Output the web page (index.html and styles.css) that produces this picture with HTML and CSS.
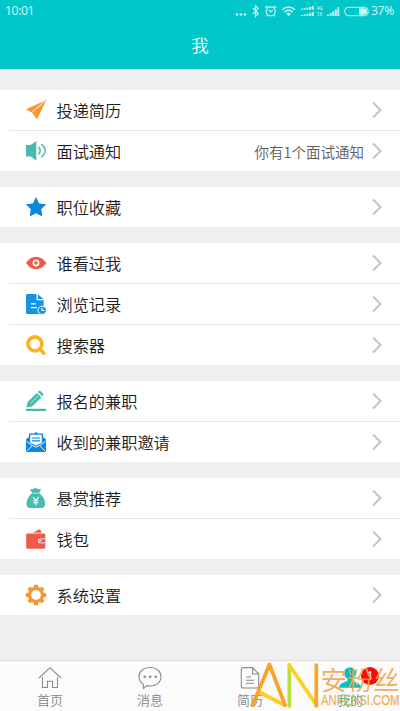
FILE: index.html
```html
<!DOCTYPE html>
<html lang="zh-CN">
<head>
<meta charset="utf-8">
<title>我</title>
<link rel="stylesheet" href="styles.css">
</head>
<body>
<svg class="defs" aria-hidden="true"><symbol id="chevron" viewBox="0 0 10 18"><path d="M1 1.5 8.5 9 1 16.5" fill="none" stroke="#c3c3c8" stroke-width="2"/></symbol></svg>
<div class="screen">
  <header class="header">
    <div class="status">
      <span class="time">10:01</span>
      <svg class="indicators" width="147" height="20" viewBox="234 0 147 20" fill="#c9f6f5">
        <circle cx="237" cy="13.5" r="1.3"/><circle cx="240.9" cy="13.5" r="1.3"/><circle cx="244.8" cy="13.5" r="1.3"/>
        <path d="m253 7 5.2 5.8-2.7 2.6V4.8l2.7 2.6-5.2 5.7" fill="none" stroke="#c9f6f5" stroke-width="1.2"/>
        <g fill="none" stroke="#c9f6f5" stroke-width="1.2"><circle cx="270.7" cy="10.3" r="4.5"/><path d="m268.7 8.8 2 2 2-2M265.5 6.7l2-1.9m6.4 0 2 1.9M267.4 14.2l-1 1.2m7.6-1.2 1 1.2"/></g>
        <g fill="none" stroke="#c9f6f5" stroke-width="1.4"><path d="M282.2 8.8q6.4-5.6 12.8 0M284.4 11.1q4.2-3.6 8.4 0"/></g><path d="m286.2 12.6q2.4-1.8 4.8 0l-2.4 2.6z"/>
        <path d="M301 8.8V7.7h2v1.1zm2.7 0V7.3h2v1.5zm2.7 0V6.6h2v2.2zm2.7 0V5.8h2v3zm2.7 0V5h2v3.8zM301 15.1V14h2v1.1zm2.7 0v-1.6h2v1.6zm2.7 0v-2.3h2v2.3zm2.7 0v-3h2v3zm2.7 0v-4h2v4z"/>
        <text class="net" x="316.5" y="9">4G</text><text class="net" x="316.5" y="15.4">1X</text>
        <path d="M327 15v-1.5h2V15zm2.6 0v-2.8h2V15zm2.6 0v-4.5h2V15zm2.6 0V8.6h2V15zm2.6 0V6.2h1.8V15z"/>
        <rect x="344.7" y="6.3" width="23.6" height="8.4" rx="3.8" fill="none" stroke="#c9f6f5"/><path d="M359 7.2h5q3.2 0 3.2 3.3t-3.2 3.3h-5z"/>
      </svg>
      <span class="percent">37%</span>
    </div>
    <h1 class="title">我</h1>
  </header>

  <main class="content">
    <section class="group">
      <div class="row">
        <svg class="icon" viewBox="0 0 20 20" fill="#f7982f"><path d="M20.3 0 0 9.2l4.8 2.8L16.8 3 6.2 12.8 11 19.6z"/><path d="m4.6 11.8 2 1.2L20 .2z"/><path d="M19 1.2 5.4 12.7" stroke="#fff" stroke-width=".8"/></svg>
        <span class="label">投递简历</span><svg class="arrow"><use href="#chevron"/></svg>
      </div>
      <div class="row">
        <svg class="icon" viewBox="0 0 20 20" fill="#48bbb1"><path d="M0 4h4.6L10.3 0v19.5L4.6 15.5H0z"/><path d="M12.4 6q3.5 3.8 0 7.5M15.2 3.2q8 6.5 0 13" fill="none" stroke="#48bbb1" stroke-width="1.5"/></svg>
        <span class="label">面试通知</span><span class="note">你有1个面试通知</span><svg class="arrow"><use href="#chevron"/></svg>
      </div>
    </section>

    <section class="group">
      <div class="row">
        <svg class="icon" viewBox="0 0 20 20"><path fill="#0c87df" d="m10 0 3.2 6.4 7 .9-5 4.9 1.2 7.3L10 16.2l-6.3 3.3L4.8 12.2-.1 7.3l6.9-.9z"/></svg>
        <span class="label">职位收藏</span><svg class="arrow"><use href="#chevron"/></svg>
      </div>
    </section>

    <section class="group">
      <div class="row">
        <svg class="icon" viewBox="0 0 20 20"><path fill="#ed594b" d="M0 10Q4.5 3.8 10 3.8T20.4 10Q15.7 16.2 10 16.2T0 10z"/><circle cx="10" cy="10" r="2.6" fill="none" stroke="#fff" stroke-width="1.6"/></svg>
        <span class="label">谁看过我</span><svg class="arrow"><use href="#chevron"/></svg>
      </div>
      <div class="row">
        <svg class="icon" viewBox="0 0 20 20"><path fill="#1594df" d="M1.5 0h9v6.3h7.2v12.2q0 1.5-1.5 1.5H1.5Q0 20 0 18.5v-17Q0 0 1.5 0zM11.8 0l5.5 5h-5.5z"/><path d="M5 9.8h5M5 13.7h6" stroke="#fff" stroke-width="1.3"/><circle cx="16.2" cy="16.3" r="4.2" fill="#1594df" stroke="#fff"/><path d="M16 13.8v2.7h2.5" fill="none" stroke="#fff" stroke-width="1.1"/></svg>
        <span class="label">浏览记录</span><svg class="arrow"><use href="#chevron"/></svg>
      </div>
      <div class="row">
        <svg class="icon" viewBox="0 0 20 20" fill="none" stroke="#fcb122"><circle cx="8.9" cy="8.9" r="7" stroke-width="3.6"/><path d="m14 14.2 4 4" stroke-width="3.5" stroke-linecap="round"/></svg>
        <span class="label">搜索器</span><svg class="arrow"><use href="#chevron"/></svg>
      </div>
    </section>

    <section class="group">
      <div class="row">
        <svg class="icon" viewBox="0 0 20 20" fill="#48bbb1"><path d="M10.8 2 1.8 10.8.3 16.6l6-1.3 9.3-9zM11.8 1.1l.8-.8q1.1-.9 2.2 0l2 2q1 1.1 0 2.1l-.8.8zM0 17.8h20V20H0z"/><path d="m4.6 12.4 7.6-7.6" stroke="#fff" stroke-width=".6"/></svg>
        <span class="label">报名的兼职</span><svg class="arrow"><use href="#chevron"/></svg>
      </div>
      <div class="row">
        <svg class="icon" viewBox="0 0 20 20"><path fill="#0c87df" d="M0 7.5 3 4.8V1.4h5.2L10 0l1.8 1.4H17v3.4l3 2.7v11q0 1.5-1.5 1.5h-17Q0 20 0 18.5z"/><path fill="#fff" d="M4.2 2.7h11.6v8.1L10 13.6l-5.8-2.8z"/><path d="M6 6h8M6 8.8h8" stroke="#0c87df" stroke-width="1.2"/><path d="m.5 9.2 5.8 4.3-5 5.2M19.5 9.2l-5.8 4.3 5 5.2M6.3 13.5 10 15.2l3.7-1.7" stroke="#fff" stroke-width=".9" fill="none"/></svg>
        <span class="label">收到的兼职邀请</span><svg class="arrow"><use href="#chevron"/></svg>
      </div>
    </section>

    <section class="group">
      <div class="row">
        <svg class="icon" viewBox="0 0 20 20"><path fill="#48bbb1" d="M4.7.7q2 1 3.3-.2 1.5-1 3 0 1.5 1.3 3.5.2 1 .8-1.5 4.2 6.1 4.3 6.1 11 0 4.1-4 4.1H4.5q-4 0-4-4.1 0-6.5 5.8-11Q3.6 1.4 4.7.7z"/><path d="M6.3 5.2h6.4" stroke="#fff" stroke-width=".6"/><path d="m7 9 2.8 3.6L12.6 9M9.8 12.5v4.7M7.3 12.8h5M7.3 14.8h5" fill="none" stroke="#fff" stroke-width="1.1"/></svg>
        <span class="label">悬赏推荐</span><svg class="arrow"><use href="#chevron"/></svg>
      </div>
      <div class="row">
        <svg class="icon" viewBox="0 0 20 20" fill="#ed594b"><path d="m7 3.7 6.3-3.5 1.2 1 .8 2.5z"/><path d="M1.5 4.6H18q1.3 0 1.3 1.4v3.4h-5q-2.3.2-2.3 2.5 0 2.2 2.3 2.4h5v4q0 1.5-1.5 1.5H1.7Q.2 19.8.2 18.3V6q0-1.4 1.3-1.4z"/><path d="M14.5 10.3h4.9v3.1h-4.9q-1.5-.2-1.5-1.5t1.5-1.6z"/><circle cx="14.6" cy="11.8" r=".8" fill="#fff"/></svg>
        <span class="label">钱包</span><svg class="arrow"><use href="#chevron"/></svg>
      </div>
    </section>

    <section class="group">
      <div class="row">
        <svg class="icon" viewBox="0 0 20 20"><circle cx="10" cy="10" r="6.6" fill="none" stroke="#f7982f" stroke-width="3.4"/><path d="M10-.2v3M10 17.2v3M-.2 10h3M17.2 10h3M2.9 2.9 5 5M15 15l2.1 2.1M2.9 17.1 5 15M15 5l2.1-2.1" stroke="#f7982f" stroke-width="4"/></svg>
        <span class="label">系统设置</span><svg class="arrow"><use href="#chevron"/></svg>
      </div>
    </section>
  </main>

  <nav class="tabs">
    <div class="tab">
      <svg class="tab-icon" viewBox="0 0 24 24"><path d="m1 12 11-10.3L23 12M4.5 11v10.5h5v-6.3h5v6.3h5V11"/></svg><span>首页</span>
    </div>
    <div class="tab">
      <svg class="tab-icon" viewBox="0 0 24 24"><path d="M5.3 18.3Q1 15.2 1 10.8C1 5 5.5 1.5 12 1.5S23 5 23 10.8 18 20 12 20q-1.7 0-3-.4l-3.6 2.7z"/><g fill="#8b8b8b" stroke="none"><circle cx="6.7" cy="10.8" r="1.3"/><circle cx="12.2" cy="10.8" r="1.3"/><circle cx="17.7" cy="10.8" r="1.3"/></g></svg><span>消息</span>
    </div>
    <div class="tab">
      <svg class="tab-icon" viewBox="0 0 24 24"><path d="M5 1.6h9.6L20.7 8v12q0 2-2 2H5.3q-2 0-2-2V3.6q0-2 2-2zM14.6 1.8V8h6M8 11h5M8 14.2h8M8 17.3h8"/></svg><span>简历</span>
    </div>
    <div class="tab tab-active">
      <svg class="tab-icon" viewBox="0 0 24 24"><path class="person" d="M12 1.4c4 0 6 2.5 6 5.7 0 2.6-1.4 4.6-3.5 5.7v2l6 2.7q2.5 1.3 2.5 4.2H1q0-3 2.5-4.2l6-2.7v-2C7.4 11.7 6 9.7 6 7.1c0-3.2 2-5.7 6-5.7z"/></svg><span>我的</span>
      <b class="badge">1</b>
    </div>
  </nav>
  <svg class="watermark" viewBox="250 660 150 51">
    <g fill="none" stroke-width="3.7" stroke-linecap="round">
      <path d="m260 692.5 23.5 12" stroke="#ffcd1c"/><path d="m252.5 705 17-40.5 15.5 40.5" stroke="#fba127" stroke-linejoin="round"/>
      <path d="M289.3 665v41" stroke="#b5e33b"/><path d="m289.3 665 27 40" stroke="#fbd021"/><path d="M316.3 665v41" stroke="#fba52a"/>
    </g>
    <g class="mark-text"><text class="mark-name" x="320.5" y="689.5" textLength="79" lengthAdjust="spacingAndGlyphs">安粉丝</text><text class="mark-site" x="321" y="704.7" textLength="78.5" lengthAdjust="spacingAndGlyphs">ANFENSI.COM</text></g>
  </svg>
</div>
</body>
</html>
```
FILE: styles.css
```css
* { box-sizing: border-box; }
body {
  margin: 0;
  font-family: "Noto Sans CJK SC", sans-serif;
  font-weight: 350;
  background: #efefef;
}
.defs { position: absolute; width: 0; height: 0; }
.screen {
  position: relative;
  display: flex;
  flex-direction: column;
  width: 400px;
  height: 711px;
  overflow: hidden;
}
.header {
  height: 69px;
  background: #02c7ca;
  border-bottom: 1px solid #0abfc2;
}
.status {
  display: flex;
  align-items: center;
  height: 21px;
  padding: 0 5px 0 5px;
  color: #c9f6f5;
  font: 12.2px/21px "Noto Sans", sans-serif;
  letter-spacing: -0.4px;
}
.indicators { margin-left: auto; }
.net { font: 5px Roboto, sans-serif; letter-spacing: 0; }
.percent { width: 24px; margin-left: -10px; white-space: nowrap; }
.title {
  margin: 0;
  color: #e9ffff;
  font-size: 17.5px;
  font-weight: 350;
  line-height: 48px;
  text-align: center;
}
.content {
  display: flex;
  flex: 1;
  flex-direction: column;
  gap: 16px;
  padding-top: 21px;
}
.group { background: #fff; }
.row {
  display: flex;
  align-items: center;
  height: 40px;
  padding: 0 18px 0 26px;
}
.row + .row {
  height: 41px;
  border-top: 1px solid #e9e9e9;
  border-image: linear-gradient(to right, #fff 10px, #e9e9e9 10px) 1;
}
.icon { width: 20px; height: 20px; overflow: visible; }
.label {
  flex: 1;
  margin-left: 10.5px;
  color: #1c1c1c;
  font-size: 16.2px;
  line-height: 40px;
}
.note {
  margin-right: 8px;
  color: #5c5c5c;
  font-size: 14.5px;
}
.arrow { width: 10px; height: 18px; }
.tabs {
  display: flex;
  height: 51px;
  background: #fbfbfb;
  border-top: 1px solid #dcdcdc;
}
.tab {
  position: relative;
  display: flex;
  flex: 1;
  flex-direction: column;
  align-items: center;
  padding-top: 5px;
  color: #858585;
  font-size: 13px;
  line-height: 20px;
}
.tab-icon {
  width: 24px;
  height: 24px;
  fill: none;
  stroke: #8b8b8b;
  stroke-width: 1.1;
}
.tab-active { color: #02b9bb; }
.person { fill: #02c2c5; stroke: none; }
.badge {
  position: absolute;
  top: 6px;
  left: 61px;
  width: 18px;
  height: 18px;
  border-radius: 50%;
  background: #fb0909;
  color: #fff;
  font: 12px/18px Roboto, sans-serif;
  text-align: center;
}
.watermark {
  position: absolute;
  right: 0;
  bottom: 0;
  width: 150px;
  height: 51px;
}
.mark-text { fill: #f3a548; opacity: .9; }
.mark-name { font: 350 26px "Noto Sans CJK SC", sans-serif; }
.mark-site { font: 15px "Liberation Sans", sans-serif; stroke: #f3a548; stroke-width: .25; }
```
